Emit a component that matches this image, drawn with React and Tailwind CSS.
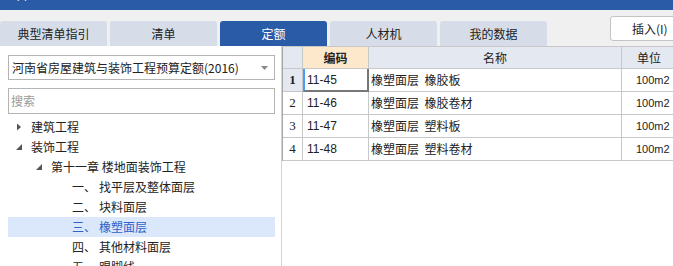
const tabs = ['典型清单指引', '清单', '定额', '人材机', '我的数据'];

const rows = [
  { no: '1', code: '11-45', name: '橡塑面层  橡胶板', unit: '100m2' },
  { no: '2', code: '11-46', name: '橡塑面层  橡胶卷材', unit: '100m2' },
  { no: '3', code: '11-47', name: '橡塑面层  塑料板', unit: '100m2' },
  { no: '4', code: '11-48', name: '橡塑面层  塑料卷材', unit: '100m2' },
];

const tree = [
  { level: 0, arrow: 'closed', label: '建筑工程' },
  { level: 0, arrow: 'open', label: '装饰工程' },
  { level: 1, arrow: 'open', label: '第十一章  楼地面装饰工程' },
  { level: 2, num: '一、', label: '找平层及整体面层' },
  { level: 2, num: '二、', label: '块料面层' },
  { level: 2, num: '三、', label: '橡塑面层', active: true },
  { level: 2, num: '四、', label: '其他材料面层' },
  { level: 2, num: '五、', label: '踢脚线' },
];

function Arrow({ type }) {
  if (type === 'closed') {
    return (
      <svg width="8" height="8" viewBox="0 0 8 8" className="shrink-0">
        <path d="M2 0.5 L6 4 L2 7.5 Z" fill="#555" />
      </svg>
    );
  }
  return (
    <svg width="8" height="8" viewBox="0 0 8 8" className="shrink-0">
      <path d="M7 1 L7 7 L1 7 Z" fill="#555" />
    </svg>
  );
}

export default function App() {
  return (
    <div
      className="w-[673px] h-[266px] overflow-hidden bg-[#f0f0f0] flex flex-col text-[#222]"
      style={{ fontFamily: '"Noto Sans CJK SC", "Noto Sans", sans-serif' }}
    >
      {/* 标题栏 */}
      <div className="h-[10px] bg-[#2a5ba7] overflow-hidden shrink-0">
        <div className="-mt-[16px] pl-[2px] text-white text-[13px] leading-[20px]">工料</div>
      </div>

      {/* 页签 */}
      <div className="h-[36px] shrink-0 flex">
        <div className="flex items-end gap-[3px]">
          {tabs.map((t) => (
            <div
              key={t}
              className={
                t === '定额'
                  ? 'w-[107px] h-[25px] rounded-t-[3px] bg-[#2a5ba7] text-white flex items-center justify-center text-[12px]'
                  : 'w-[107px] h-[25px] rounded-t-[3px] bg-[#d6dde9] text-[#222] flex items-center justify-center text-[12px]'
              }
            >
              {t}
            </div>
          ))}
        </div>
        <div className="ml-auto mt-[6px] mr-[-8px] w-[71px] h-[25px] bg-white border border-[#c4c4c4] rounded-[3px] text-[12px] flex items-center pl-[21px] whitespace-nowrap">
          插入(I)
        </div>
      </div>

      {/* 主体 */}
      <div className="flex-1 flex min-h-0">
        {/* 左侧 */}
        <div className="w-[282px] bg-white border-r border-[#d4d4d4] shrink-0 pt-[9px] pl-[8px] pr-[6px]">
          <div className="h-[25px] border border-[#b4b4b4] flex items-center pl-[3px] pr-[6px] text-[12px]">
            <span className="flex-1 whitespace-nowrap">河南省房屋建筑与装饰工程预算定额(2016)</span>
            <svg width="7" height="4" viewBox="0 0 7 4">
              <path d="M0 0 L7 0 L3.5 4 Z" fill="#888" />
            </svg>
          </div>
          <div className="h-[26px] mt-[8px] border border-[#b4b4b4] flex items-center pl-[2px] text-[12px] text-[#999]">
            搜索
          </div>
          <div className="mt-[3px]">
            {tree.map((n) => (
              <div
                key={n.label}
                className={
                  n.active
                    ? 'h-[20px] flex items-center text-[12px] bg-[#dbe8fc] text-[#2e63c8] whitespace-nowrap'
                    : 'h-[20px] flex items-center text-[12px] whitespace-nowrap'
                }
              >
                {n.level === 0 && (
                  <div className="flex items-center pl-[7px] gap-[8px]">
                    <Arrow type={n.arrow} />
                    <span>{n.label}</span>
                  </div>
                )}
                {n.level === 1 && (
                  <div className="flex items-center pl-[27px] gap-[8px]">
                    <Arrow type={n.arrow} />
                    <span>{n.label}</span>
                  </div>
                )}
                {n.level === 2 && (
                  <div className="flex items-center pl-[64px]">
                    <span className="w-[27px] shrink-0">{n.num}</span>
                    <span>{n.label}</span>
                  </div>
                )}
              </div>
            ))}
          </div>
        </div>

        {/* 右侧表格 */}
        <div className="flex-1 bg-white border-t border-[#c8c8c8] overflow-hidden">
          <div className="w-[420px] border-l border-[#a8a8a8]">
            <div className="flex h-[22px] text-[12px] border-b border-[#c8c8c8]">
              <div className="w-[20px] bg-[#e4e9f1] border-r border-[#c8c8c8]" />
              <div className="w-[66px] bg-[#fde8cc] border-r border-[#c8c8c8] flex items-center justify-center font-bold">
                编码
              </div>
              <div className="w-[253px] bg-[#e4e9f1] border-r border-[#c8c8c8] flex items-center justify-center">
                名称
              </div>
              <div className="flex-1 bg-[#e4e9f1] flex items-center pl-[15px]">单位</div>
            </div>
            {rows.map((r, i) => (
              <div key={r.no} className="flex h-[23px] border-b border-[#c8c8c8]">
                <div
                  className={
                    i === 0
                      ? 'w-[20px] bg-[#e4e9f1] border-r border-[#c8c8c8] flex items-center justify-center text-[13px] font-bold'
                      : 'w-[20px] bg-white border-r border-[#c8c8c8] flex items-center justify-center text-[13px]'
                  }
                  style={{ fontFamily: '"Liberation Serif", serif' }}
                >
                  {r.no}
                </div>
                <div
                  className={
                    i === 0
                      ? 'w-[66px] border-l-2 border-l-[#4a9bf5] border-r-2 border-r-[#777] border-b-2 border-b-[#777] -mb-[1px] flex items-center pl-[2px] text-[12px]'
                      : 'w-[66px] border-r border-[#c8c8c8] flex items-center pl-[4px] text-[12px]'
                  }
                  style={{ fontFamily: '"Liberation Sans", sans-serif' }}
                >
                  {r.code}
                </div>
                <div className="w-[253px] border-r border-[#c8c8c8] flex items-center pl-[2px] text-[12px] whitespace-pre">
                  {r.name}
                </div>
                <div
                  className="flex-1 flex items-center pl-[14px] text-[11px]"
                  style={{ fontFamily: '"Liberation Sans", sans-serif' }}
                >
                  {r.unit}
                </div>
              </div>
            ))}
          </div>
        </div>
      </div>
    </div>
  );
}
